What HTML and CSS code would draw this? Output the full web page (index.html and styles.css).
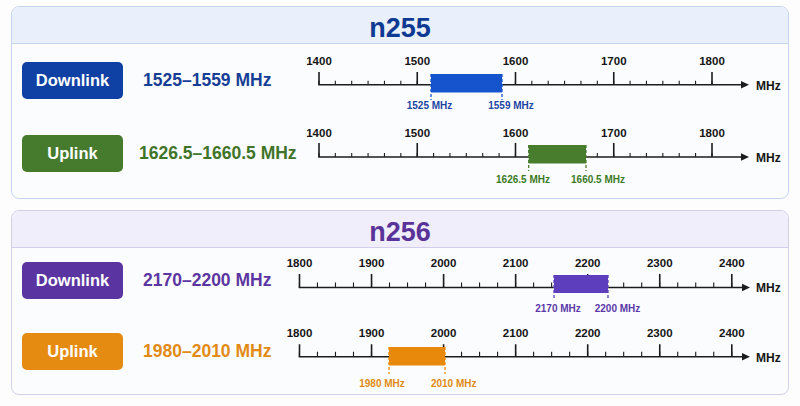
FILE: index.html
```html
<!DOCTYPE html>
<html lang="en">
<head>
<meta charset="utf-8">
<title>n255 / n256 bands</title>
<link rel="stylesheet" href="styles.css">
</head>
<body>
<main class="page">
  <section class="panel n255">
    <h2 class="panel-head">n255</h2>
    <div class="panel-body">
      <div class="row blue">
        <div class="label-group"><span class="tag">Downlink</span><span class="range">1525–1559 MHz</span></div>
        <svg class="axis" width="498" height="73" viewBox="0 0 498 73">
          <g class="ticklabels">
            <text x="29" y="15">1400</text><text x="127.25" y="15">1500</text><text x="225.5" y="15">1600</text><text x="323.75" y="15">1700</text><text x="422" y="15">1800</text>
          </g>
          <line class="minor" x1="28.4" y1="32.7" x2="423" y2="32.7" stroke-width="4"/>
          <line class="major" x1="28.2" y1="28.4" x2="424" y2="28.4" stroke-width="12.6"/>
          <line class="baseline" x1="28.2" y1="34.7" x2="452" y2="34.7"/>
          <polygon class="arrow" points="451,31 459,34.7 451,38.4"/>
          <text class="unit" x="466" y="40">MHz</text>
          <rect class="band" x="141" y="24" width="71" height="18.5"/>
          <line class="edge" x1="141" y1="24" x2="141" y2="50"/>
          <line class="edge" x1="212" y1="24" x2="212" y2="50"/>
          <text class="bandlabel" x="139.5" y="59.3">1525 MHz</text>
          <text class="bandlabel" x="221" y="59.3">1559 MHz</text>
        </svg>
      </div>
      <div class="row green">
        <div class="label-group"><span class="tag">Uplink</span><span class="range shift">1626.5–1660.5 MHz</span></div>
        <svg class="axis" width="498" height="73" viewBox="0 0 498 73">
          <g class="ticklabels">
            <text x="29" y="13.5">1400</text><text x="127.25" y="13.5">1500</text><text x="225.5" y="13.5">1600</text><text x="323.75" y="13.5">1700</text><text x="422" y="13.5">1800</text>
          </g>
          <line class="minor" x1="28.4" y1="32" x2="423" y2="32" stroke-width="4"/>
          <line class="major" x1="28.2" y1="27" x2="424" y2="27" stroke-width="14"/>
          <line class="baseline" x1="28.2" y1="34" x2="452" y2="34"/>
          <polygon class="arrow" points="451,30.3 459,34 451,37.7"/>
          <text class="unit" x="466" y="38.5">MHz</text>
          <rect class="band" x="238.7" y="22" width="57.3" height="18.5"/>
          <line class="edge" x1="238.7" y1="22" x2="238.7" y2="48"/>
          <line class="edge" x1="296" y1="22" x2="296" y2="48"/>
          <text class="bandlabel" x="233" y="59.7">1626.5 MHz</text>
          <text class="bandlabel" x="308" y="59.7">1660.5 MHz</text>
        </svg>
      </div>
    </div>
  </section>

  <section class="panel n256">
    <h2 class="panel-head">n256</h2>
    <div class="panel-body">
      <div class="row purple">
        <div class="label-group"><span class="tag">Downlink</span><span class="range">2170–2200 MHz</span></div>
        <svg class="axis" width="498" height="71" viewBox="0 0 498 71">
          <g class="ticklabels">
            <text x="9.5" y="16.7">1800</text><text x="81.55" y="16.7">1900</text><text x="153.6" y="16.7">2000</text><text x="225.65" y="16.7">2100</text><text x="297.7" y="16.7">2200</text><text x="369.75" y="16.7">2300</text><text x="441.8" y="16.7">2400</text>
          </g>
          <line class="minor" x1="8.9" y1="35" x2="443" y2="35" stroke-width="5"/>
          <line class="major" x1="8.7" y1="30.75" x2="444" y2="30.75" stroke-width="13.5"/>
          <line class="baseline" x1="8.7" y1="37.5" x2="453" y2="37.5"/>
          <polygon class="arrow" points="452,33.8 460,37.5 452,41.2"/>
          <text class="unit" x="466" y="42">MHz</text>
          <rect class="band" x="264" y="25" width="54" height="18"/>
          <line class="edge" x1="264" y1="25" x2="264" y2="50"/>
          <line class="edge" x1="318" y1="25" x2="318" y2="50"/>
          <text class="bandlabel" x="268" y="62">2170 MHz</text>
          <text class="bandlabel" x="327.5" y="62">2200 MHz</text>
        </svg>
      </div>
      <div class="row orange">
        <div class="label-group"><span class="tag">Uplink</span><span class="range">1980–2010 MHz</span></div>
        <svg class="axis" width="498" height="71" viewBox="0 0 498 71">
          <g class="ticklabels">
            <text x="9.5" y="16.3">1800</text><text x="81.55" y="16.3">1900</text><text x="153.6" y="16.3">2000</text><text x="225.65" y="16.3">2100</text><text x="297.7" y="16.3">2200</text><text x="369.75" y="16.3">2300</text><text x="441.8" y="16.3">2400</text>
          </g>
          <line class="minor" x1="8.9" y1="33.2" x2="443" y2="33.2" stroke-width="5"/>
          <line class="major" x1="8.7" y1="29.5" x2="444" y2="29.5" stroke-width="12.4"/>
          <line class="baseline" x1="8.7" y1="35.7" x2="453" y2="35.7"/>
          <polygon class="arrow" points="452,32 460,35.7 452,39.4"/>
          <text class="unit" x="466" y="41">MHz</text>
          <rect class="band" x="99" y="26" width="56" height="18.5"/>
          <line class="edge" x1="99" y1="26" x2="99" y2="53"/>
          <line class="edge" x1="155" y1="26" x2="155" y2="53"/>
          <text class="bandlabel" x="92" y="65.7">1980 MHz</text>
          <text class="bandlabel" x="163.7" y="65.7">2010 MHz</text>
        </svg>
      </div>
    </div>
  </section>
</main>
</body>
</html>
```

FILE: styles.css
```css
* {
  box-sizing: border-box;
}

html,
body {
  margin: 0;
  width: 800px;
  height: 406px;
  overflow: hidden;
  background: #fdfdfe;
  font-family: "Liberation Sans", Arial, sans-serif;
}

.page {
  display: flex;
  flex-direction: column;
  gap: 11px;
  padding: 6px 11px 0;
}

.panel {
  border: 1px solid #c6d5ee;
  border-radius: 8px;
  background: #fbfcfe;
  overflow: hidden;
}

.panel-head {
  margin: 0;
  height: 37px;
  padding-top: 6px;
  line-height: 30px;
  text-align: center;
  font-size: 27px;
  font-weight: bold;
  border-bottom: 1px solid #c6d5ee;
}

.n255 .panel-head {
  background: #e9f0fb;
  color: #0e3a93;
}

.n256 {
  border-color: #d3cee9;
}

.n256 .panel-head {
  background: #f0eefb;
  color: #5a3399;
  border-bottom-color: #d3cee9;
}

.panel-body {
  padding: 6px 0 2px 10px;
}

.n256 .panel-body {
  padding-top: 2px;
}

.row {
  display: flex;
  height: 73px;
}

.n256 .row {
  height: 71px;
}

.label-group {
  display: flex;
  align-items: center;
  flex: none;
  width: 268px;
  height: 37px;
  margin-top: 12px;
}

.tag {
  flex: none;
  width: 101px;
  height: 37px;
  border-radius: 5px;
  background: var(--btn);
  color: #fff;
  font-size: 16.5px;
  font-weight: bold;
  line-height: 37px;
  text-align: center;
}

.range {
  margin-left: 20px;
  font-size: 17.5px;
  font-weight: bold;
  white-space: nowrap;
  color: var(--text);
}

.range.shift {
  margin-left: 16px;
}

.blue {
  --btn: #0f40a4;
  --text: #173e96;
  --box: #1654cd;
  --lbl: #1b45a3;
}

.green {
  --btn: #467a2d;
  --text: #3f7429;
  --box: #477d2d;
  --lbl: #3d7a26;
}

.purple {
  --btn: #5a34a0;
  --text: #5b36a1;
  --box: #5d3ebd;
  --lbl: #5a38a8;
}

.orange {
  --btn: #e68b12;
  --text: #e28a15;
  --box: #e8890c;
  --lbl: #e08a12;
}

.axis {
  flex: none;
  width: 498px;
  overflow: visible;
}

.ticklabels text {
  font-size: 11.5px;
  font-weight: bold;
  fill: #151515;
  text-anchor: middle;
}

.minor,
.major,
.baseline {
  stroke: #1c1c1c;
  fill: none;
}

.n255 .minor {
  stroke-dasharray: 1.1 15.275;
}

.n255 .major {
  stroke-dasharray: 1.6 96.65;
}

.n256 .minor {
  stroke-dasharray: 1.1 16.9125;
}

.n256 .major {
  stroke-dasharray: 1.6 70.45;
}

.baseline {
  stroke-width: 1.6;
}

.arrow {
  fill: #1c1c1c;
}

.unit {
  font-size: 12px;
  font-weight: bold;
  fill: #151515;
}

.band {
  fill: var(--box);
}

.edge {
  stroke: var(--box);
  stroke-width: 1.3;
  stroke-dasharray: 3 2;
}

.bandlabel {
  font-size: 10px;
  font-weight: bold;
  fill: var(--lbl);
  text-anchor: middle;
}
```
